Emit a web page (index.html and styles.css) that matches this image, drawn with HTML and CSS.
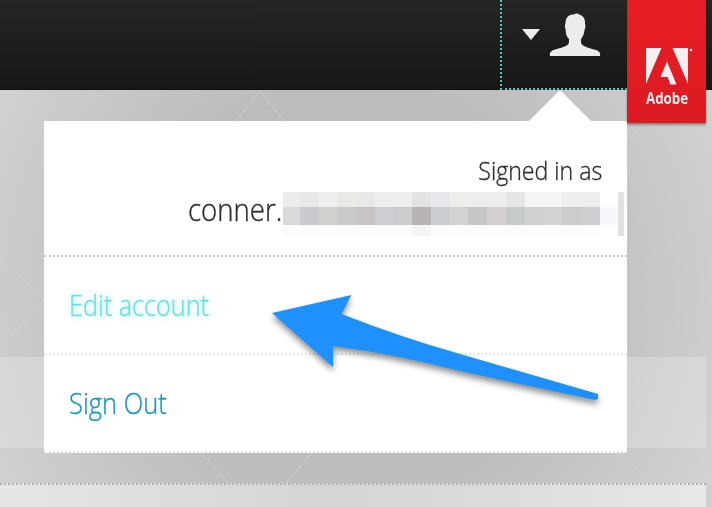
FILE: index.html
```
<!DOCTYPE html>
<html lang="en">
<head>
<meta charset="utf-8">
<title>Account menu</title>
<link rel="stylesheet" href="styles.css">
</head>
<body>
<header class="topbar">
  <button class="account" aria-label="Account">
    <svg class="caret" width="18" height="11" viewBox="0 0 18 11"><path d="M0 0H18L9 11Z"/></svg>
    <svg class="person" width="52" height="44" viewBox="0 0 52 44"><path d="M1 43C0 39 3 37 8 36C14 34 20 33 20 29V26C17 23 17 20 16.500 16C15.500 14 16 12 16.500 10C16.500 4 20 1.500 25 1.500C26 .5 28 .3 29 1C33 2 36.500 5 36 10.500C36.800 13 36.500 15 35.500 17C35 21 34 24 32 26V29C32 33 38 34 43 36C49 37 52 39 51 43Z"/></svg>
  </button>
  <div class="brand">
    <svg class="logo" width="48" height="38" viewBox="0 0 48 38"><path d="M0 0H15.500L0 36ZM26.500 0H42V36ZM21 13.500L30.500 36.500H24.500L21.500 29H14.500Z"/><circle cx="45" cy="2" r="1.300"/></svg>
    <span class="brand-name">Adobe</span>
  </div>
</header>
<main class="stage">
  <svg class="facets" width="712" height="393" viewBox="0 90 712 393">
    <path d="M230 128L260 91L290 128M0 257L44 300M44 300L0 346M195 446L228 483M318 446L286 483M618 450L650 483M700 483L712 470M630 138L644 122"/>
  </svg>
  <div class="band"></div>
</main>
<footer class="bottom"><div class="sheet"></div></footer>

<nav class="menu">
  <div class="identity">
    <p class="signed"><span>Signed in as</span></p>
    <p class="mail"><span>conner.</span></p>
    <svg class="redaction" width="342" height="44" viewBox="283 192 342 44" shape-rendering="crispEdges">
      <g transform="translate(0 192)">
        <path fill="#ececed" d="M283 0h17v15h-17z"/><path fill="#e8e8eb" d="M300 0h19v15h-19z"/><path fill="#efefed" d="M319 0h18v15h-18z"/><path fill="#e9eae6" d="M337 0h19v15h-19z"/><path fill="#e9e7e8" d="M356 0h19v15h-19z"/><path fill="#eeeeee" d="M375 0h37v15h-37z"/><path fill="#e3e3e3" d="M412 0h19v15h-19z"/><path fill="#e6e8eb" d="M431 0h19v15h-19z"/><path fill="#ebeeeb" d="M450 0h18v15h-18z"/><path fill="#ededed" d="M468 0h19v15h-19z"/><path fill="#efedec" d="M487 0h19v15h-19z"/><path fill="#e4e7e5" d="M506 0h19v15h-19z"/><path fill="#f3f5f5" d="M525 0h37v15h-37z"/><path fill="#eeeeef" d="M562 0h38v15h-38z"/>
      </g>
      <g transform="translate(0 207)">
        <path fill="#d9d9dc" d="M283 0h17v18h-17z"/><path fill="#cbc9cf" d="M300 0h19v18h-19z"/><path fill="#d0d0cc" d="M319 0h18v18h-18z"/><path fill="#cacac9" d="M337 0h19v18h-19z"/><path fill="#c8c3c5" d="M356 0h19v18h-19z"/><path fill="#cdced1" d="M375 0h18v18h-18z"/><path fill="#cbccce" d="M393 0h19v18h-19z"/><path fill="#b8b3b3" d="M412 0h19v18h-19z"/><path fill="#caced2" d="M431 0h19v18h-19z"/><path fill="#d0d3cf" d="M450 0h18v18h-18z"/><path fill="#c5c5c5" d="M468 0h19v18h-19z"/><path fill="#d5cfd1" d="M487 0h19v18h-19z"/><path fill="#c6cbc9" d="M506 0h19v18h-19z"/><path fill="#d0d1d2" d="M525 0h18v18h-18z"/><path fill="#d2d2d0" d="M543 0h19v18h-19z"/><path fill="#cecbcd" d="M562 0h19v18h-19z"/><path fill="#cfcfd2" d="M581 0h19v18h-19z"/><path fill="#f7f8fc" d="M600 0h18v18h-18z"/>
      </g>
      <path fill="#fbfbfb" d="M283 225h317v11h-317z"/><path fill="#f6f3f5" d="M412 225h19v11h-19z"/><path fill="#e1e1e1" d="M618 192h6v44h-6z"/>
    </svg>
  </div>
  <a class="item active"><span>Edit account</span></a>
  <a class="item signout"><span>Sign Out</span></a>
</nav>

<svg class="pointer" width="350" height="130" viewBox="260 280 350 130">
  <path d="M272 313L351.500 295L341.500 314Q400 337 460 354L598 394V399L595 400L460 371Q395 354 333 346V367Z"/>
</svg>
</body>
</html>
```

FILE: styles.css
```
* { box-sizing: border-box; }
body {
  margin: 0;
  width: 712px;
  height: 507px;
  overflow: hidden;
  position: relative;
  display: flex;
  flex-direction: column;
  font-family: "Open Sans", sans-serif;
  font-weight: 300;
}
p { margin: 0; }

.topbar {
  height: 90px;
  flex: none;
  display: flex;
  justify-content: flex-end;
  align-items: flex-start;
  padding-right: 6px;
  background: linear-gradient(#252525, #171717);
  border-bottom: 1px solid #101010;
  position: relative;
  z-index: 3;
}
.account {
  width: 127px;
  height: 90px;
  padding: 13px 26px 0 20px;
  display: flex;
  align-items: flex-start;
  justify-content: space-between;
  background: none;
  border: 0 solid transparent;
  border-left: 2px dotted #50c3c3;
  border-bottom: 2px dotted #50c3c3;
}
.caret { fill: #ececec; margin-top: 16px; }
.person { fill: #ececec; }
.brand {
  width: 79px;
  height: 123px;
  padding: 48px 0 0 19px;
  background: linear-gradient(#e71d25, #dc1b21);
  box-shadow: 0 2px 2px rgba(0, 0, 0, .35);
}
.logo { display: block; fill: #f5eff1; }
.brand-name {
  display: block;
  width: max-content;
  margin-top: 2px;
  font-size: 16px;
  line-height: 20px;
  font-weight: 700;
  color: #f5eff1;
  transform: scaleX(.83);
  transform-origin: left;
}

.stage {
  flex: 1;
  padding-top: 267px;
  position: relative;
  background:
    radial-gradient(ellipse 460px 460px at 350px 200px, #bcbcbc 45%, rgba(190, 190, 190, 0) 100%),
    #d8d8d8;
}
.facets { position: absolute; inset: 0; fill: none; stroke: #d6d6d6; stroke-opacity: .7; }
.band { width: 706px; height: 91px; background: rgba(255, 255, 255, .22); }
.bottom { height: 24px; flex: none; background: #d0d0d0; padding-right: 6px; }
.sheet {
  height: 24px;
  border-top: 2px dotted #b2b2b2;
  background: linear-gradient(90deg, #e6e6e6, #d5d5d5 45%, #d8d8d8 60%, #e8e8e8);
}

.menu {
  position: absolute;
  left: 44px;
  top: 121px;
  width: 583px;
  height: 332px;
  background: #fff;
  z-index: 2;
  -webkit-text-stroke: .35px currentColor;
}
.menu::before {
  content: "";
  position: absolute;
  right: 36px;
  top: -31px;
  border: 31px solid transparent;
  border-top: 0;
  border-bottom-color: #fff;
}
.identity {
  height: 136px;
  padding-top: 31px;
  position: relative;
  border-bottom: 2px dotted #c8c8c8;
  color: #2c2c2c;
}
.identity span, .item span { display: inline-block; white-space: nowrap; }
.signed {
  padding-right: 25px;
  text-align: right;
  font-size: 26px;
  line-height: 36px;
}
.signed span { transform: scaleX(.89); transform-origin: right; }
.mail {
  padding-left: 144px;
  font-size: 31px;
  line-height: 43px;
}
.mail span { transform: scaleX(.89); transform-origin: left; }
.redaction { position: absolute; left: 239px; top: 71px; }
.item {
  display: flex;
  align-items: center;
  height: 98px;
  padding: 0 25px;
  border-bottom: 2px dotted #e8e8e8;
  font-size: 29px;
  line-height: 40px;
  color: #1599b5;
}
.item span { transform: scaleX(.88); transform-origin: left; }
.active { color: #6ce3e1; text-shadow: 0 0 7px rgba(80, 200, 200, .5); }
.active span { transform: scaleX(.87); }

.pointer {
  position: absolute;
  left: 260px;
  top: 280px;
  z-index: 4;
  fill: #1e90ff;
  filter: drop-shadow(0 4px 3px rgba(0, 0, 0, .45));
}
```
